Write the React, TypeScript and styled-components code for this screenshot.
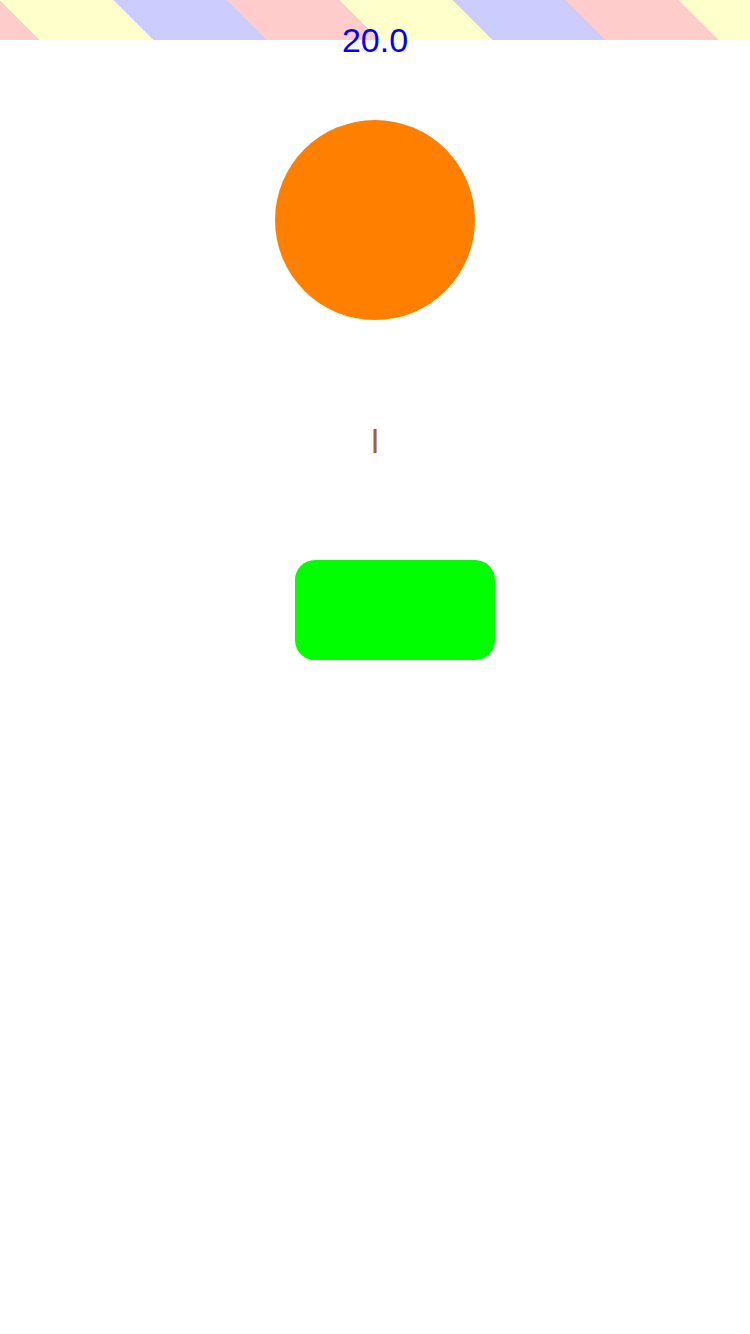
import React from "react";
import styled, { createGlobalStyle } from "styled-components";

const GlobalStyle = createGlobalStyle`
  html, body {
    margin: 0;
    padding: 0;
    background: #ffffff;
  }
  body {
    font-family: "Liberation Sans", Arial, sans-serif;
  }
`;

const Page = styled.div`
  width: 750px;
  min-height: 1334px;
  display: flex;
  flex-direction: column;
  align-items: center;
  background-color: #ffffff;
  background-image: repeating-linear-gradient(
    45deg,
    #ffcccc 0px,
    #ffcccc 28.28px,
    #ffffcc 28.28px,
    #ffffcc 108.28px,
    #ccccff 108.28px,
    #ccccff 188.28px,
    #ffcccc 188.28px,
    #ffcccc 240px
  );
  background-size: 100% 40px;
  background-repeat: no-repeat;
  background-position: 0 0;
`;

const Label = styled.div<{ $color: string; $top: number }>`
  margin-top: ${(p) => p.$top}px;
  font-family: "Liberation Sans", Arial, sans-serif;
  font-size: 34px;
  line-height: 40px;
  height: 40px;
  color: ${(p) => p.$color};
  text-align: center;
  white-space: nowrap;
`;

const Circle = styled.div`
  margin-top: 60px;
  width: 200px;
  height: 200px;
  border-radius: 50%;
  background: #ff8000;
`;

const GreenBox = styled.div`
  margin-top: 99px;
  margin-left: 40px;
  width: 200px;
  height: 100px;
  border-radius: 20px;
  background: #00ff00;
`;

export default function App() {
  return (
    <>
      <GlobalStyle />
      <Page>
        <Label $color="#0000ff" $top={20}>20.0</Label>
        <Circle />
        <Label $color="#9c6430" $top={101}>l</Label>
        <GreenBox />
      </Page>
    </>
  );
}
